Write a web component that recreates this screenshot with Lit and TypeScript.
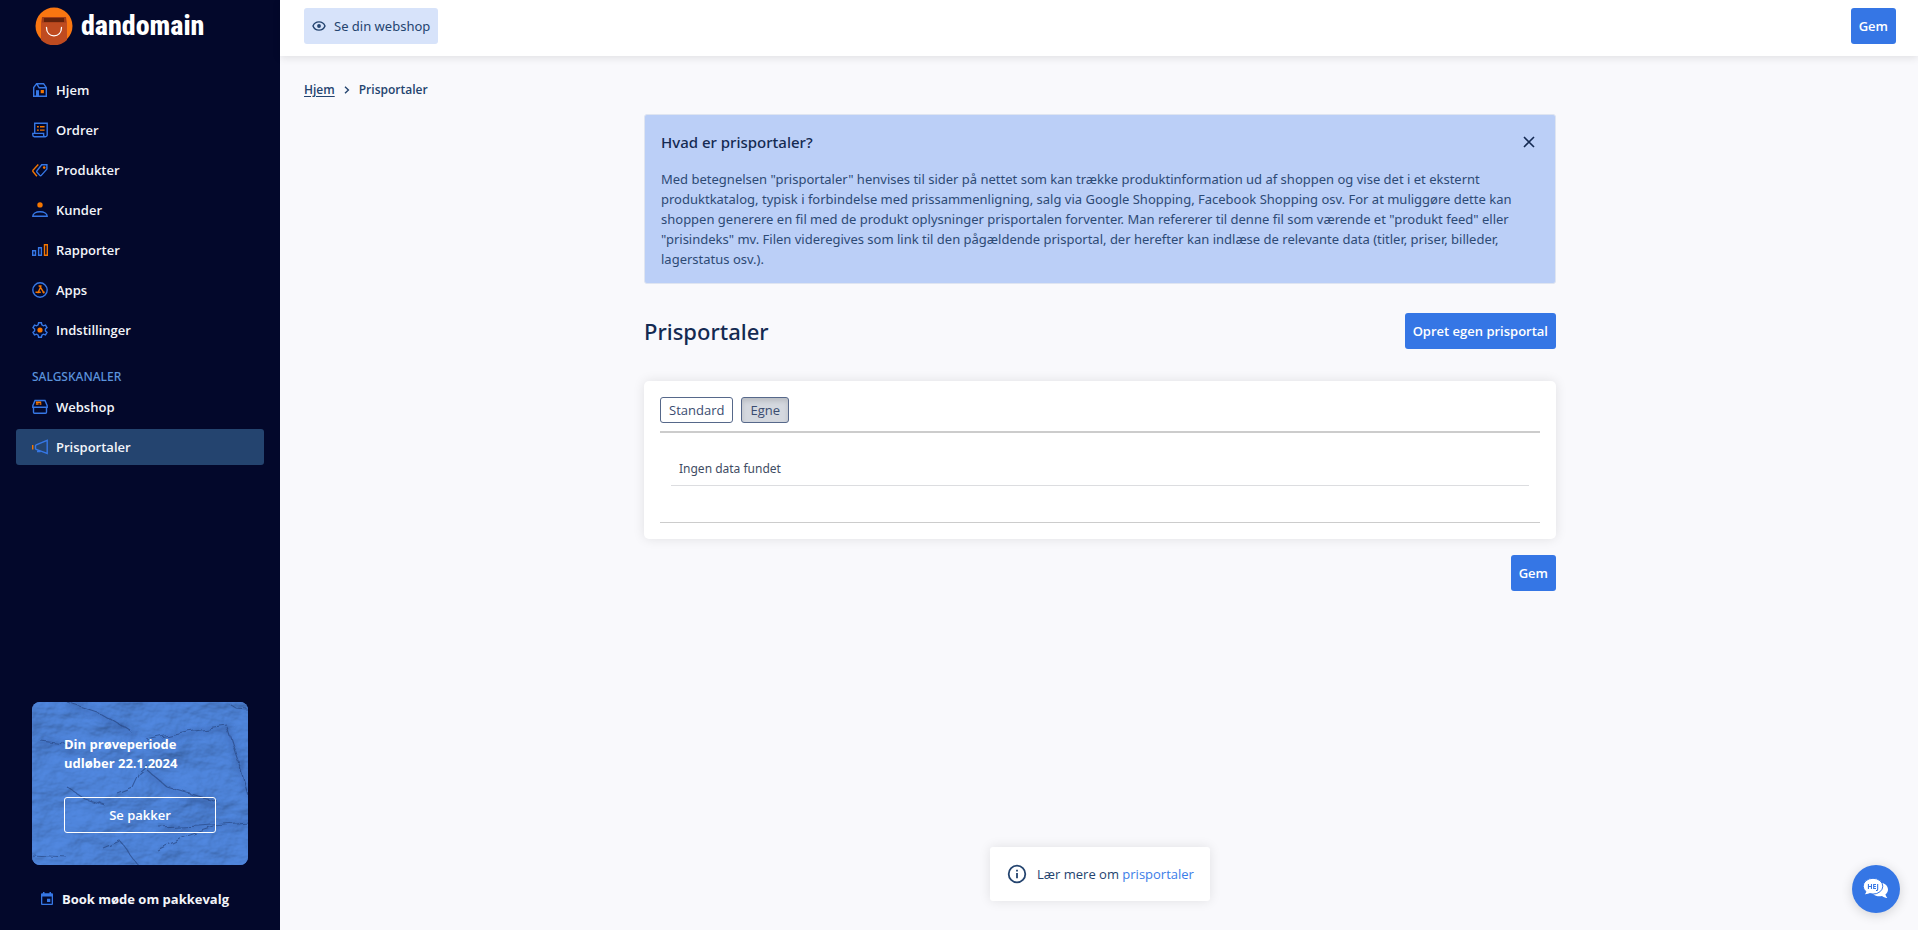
import { LitElement, html, svg, css, TemplateResult } from "lit";
import { customElement, property, state } from "lit/decorators.js";
import { classMap } from "lit/directives/class-map.js";

const icons: Record<string, TemplateResult> = {
  home: svg`<path class="b" d="M1.7 14.3V5.6L4.6 1.7h7l2.7 3.9v8.7zM4.6 1.7l2.6 4.1h7"/><path class="bf" d="M4 8.2h3v6H4z"/><path class="of" d="M8.7 8h3.2v3.2H8.7z"/>`,
  orders: svg`<path class="b" d="M2.7 11.2V1.2h12.5v11.6a1.8 1.8 0 0 1-1.8 1.9H2.4A1.7 1.7 0 0 1 .8 13v-1.6h10.8V13a1.7 1.7 0 0 0 1.8 1.7"/><path class="o" d="M5 4.8h1.8M8 4.8h4.6M5 8.1h1.8M8 8.1h4.6"/>`,
  products: svg`<path class="b" d="M9.7 2.7h5.2v4.4l-5.6 6.3a1 1 0 0 1-1.5 0L5 10.3a1 1 0 0 1 0-1.5z"/><circle class="of" cx="12.2" cy="5.6" r="1.3"/><path class="o" d="M6.3 2.6.9 8.3v1.2l4 4.7"/>`,
  customers: svg`<circle class="of" cx="8" cy="2.9" r="2.7"/><path class="b" d="M.8 14.3c0-2.7 3-4.6 7.2-4.6s7.2 1.9 7.2 4.6z"/>`,
  reports: svg`<path class="b" d="M.7 8.700h2.800v4.600H.7zM6.600 5.700h2.800v7.600H6.600z"/><path class="o" d="M12.500 2.700h2.800v10.600h-2.800z"/>`,
  apps: svg`<circle class="b" cx="8" cy="8" r="7.200"/><path class="o" d="M8.800 4.800 5.700 11.300M7.600 3.800l4.600 7.500M3.500 10.300h5.300M10.500 10.300h2.200M6.600 4h3"/>`,
  settings: svg`<path class="b" d="M6.600.8h2.800l.5 2.100 1.500.9 2.100-.7 1.500 2.500-1.600 1.500v1.800l1.600 1.500-1.500 2.500-2.100-.7-1.500.9-.5 2.100H6.600l-.5-2.100-1.500-.9-2.100.7L1 10.400l1.600-1.500V7.100L1 5.600l1.500-2.500 2.100.7 1.500-.9z"/><circle class="of" cx="8" cy="8" r="2.600"/>`,
  webshop: svg`<path class="b" d="M.8 8.300V6.600L3 1.500h10l2.200 5.100v1.700zM1.500 8.300v4.900a1 1 0 0 0 1 1h11a1 1 0 0 0 1-1V8.300"/><path class="o" d="M3.900 3.300h5.300M3.900 5h2.700M7.600 5h1.800"/>`,
  feed: svg`<path class="b" d="M15.200 1.400v13L11 12.800 4.200 10.400a1 1 0 0 1-.7-.9V6.800a1 1 0 0 1 .7-.9zM5.700 11v1.500h2.800"/><path class="o" d="M.7 6v4.600"/>`,
};

@customElement("nav-icon")
class NavIcon extends LitElement {
  @property() name = "home";
  static styles = css`
    :host { display: block; width: 16px; height: 16px; }
    svg { display: block; }
    .b, .o { fill: none; stroke: #3677e5; stroke-width: 1.4; }
    .o { stroke: #f57600; }
    .bf { fill: #3677e5; }
    .of { fill: #f57600; }
  `;
  render() {
    return html`<svg width="16" height="16" viewBox="0 0 16 16" aria-hidden="true">${icons[this.name]}</svg>`;
  }
}

@customElement("side-bar")
class SideBar extends LitElement {
  static styles = css`
    :host {
      display: flex;
      flex-direction: column;
      box-sizing: border-box;
      background: #03082b;
      color: #f3f5fa;
      padding: 7px 16px 13px;
    }
    a { color: inherit; text-decoration: none; }
    .logo {
      display: flex;
      align-items: center;
      gap: 8px;
      height: 38px;
      padding-left: 19px;
      margin-bottom: 27px;
      color: #fff;
      font: 800 28px/38px "Roboto Condensed", Roboto, sans-serif;
    }
    .nav { display: flex; flex-direction: column; gap: 4px; margin: 0; padding: 0; list-style: none; }
    .item {
      display: flex;
      align-items: center;
      gap: 8px;
      height: 36px;
      padding: 0 16px;
      border-radius: 3px;
      font-weight: 600;
    }
    .active { background: #24446f; }
    .group {
      margin: 19px 16px 2px;
      font-family: "Noto Sans", sans-serif;
      font-size: 12px;
      line-height: 20px;
      font-weight: 500;
      color: #5b93dc;
    }
    .trial {
      display: grid;
      margin: auto 16px 0;
      border-radius: 8px;
      overflow: hidden;
      background: #4e80d9;
    }
    .paper, .content { grid-area: 1 / 1; min-width: 0; }
    .paper { width: 100%; height: 100%; min-height: 0; contain: size; }
    .content { z-index: 1; padding: 33px 32px 32px; font-weight: 700; line-height: 19px; color: #fff; }
    .content p { margin: 0 0 24px; }
    .packages {
      display: block;
      width: 100%;
      height: 36px;
      border: 1px solid #fff;
      border-radius: 3px;
      background: transparent;
      color: #fff;
      font: inherit;
      font-weight: 600;
      cursor: pointer;
    }
    .book {
      display: flex;
      align-items: center;
      gap: 9px;
      height: 36px;
      margin-top: 16px;
      padding-left: 25px;
      font-weight: 700;
    }
    .book svg { margin-bottom: 2px; }
  `;
  private link(icon: string, text: string, active = false) {
    return html`<li><a href="#" class=${classMap({ item: true, active })}><nav-icon .name=${icon}></nav-icon>${text}</a></li>`;
  }
  render() {
    return html`
      <a class="logo" href="#">
        <svg width="38" height="38" viewBox="0 0 38 38" aria-hidden="true">
          <circle cx="19" cy="19" r="18.500" fill="#f97611"/>
          <path d="M7 10h24l1 5v18a18.500 18.500 0 0 1-26 0V15z" fill="#bf4b20"/>
          <path d="M7 10h24v5.500H7z" fill="#a13c17"/>
          <path d="M9 11h20v4H9z" fill="#64220c"/>
          <path d="M11.500 20.500c0 5.300 3.200 8.300 7.500 8.300s7.500-3 7.500-8.300" fill="none" stroke="#fff" stroke-width="1.300" stroke-linecap="round"/>
        </svg>
        <span>dandomain</span>
      </a>
      <nav>
        <ul class="nav">
          ${this.link("home", "Hjem")}${this.link("orders", "Ordrer")}${this.link("products", "Produkter")}
          ${this.link("customers", "Kunder")}${this.link("reports", "Rapporter")}${this.link("apps", "Apps")}
          ${this.link("settings", "Indstillinger")}
        </ul>
        <div class="group">SALGSKANALER</div>
        <ul class="nav">
          ${this.link("webshop", "Webshop")}${this.link("feed", "Prisportaler", true)}
        </ul>
      </nav>
      <section class="trial">
        <svg class="paper" viewBox="0 0 216 163" preserveAspectRatio="none" aria-hidden="true">
          <defs>
            <filter id="grain" x="0" y="0" width="100%" height="100%">
              <feTurbulence type="fractalNoise" baseFrequency="0.018 0.026" numOctaves="5" seed="11" result="n"/>
              <feDiffuseLighting in="n" surfaceScale="6" diffuseConstant="1.050" lighting-color="#5085dc">
                <feDistantLight azimuth="235" elevation="62"/>
              </feDiffuseLighting>
            </filter>
            <filter id="soft" x="-5%" y="-5%" width="110%" height="110%">
              <feTurbulence type="fractalNoise" baseFrequency="0.06" numOctaves="3" seed="4" result="w"/>
              <feDisplacementMap in="SourceGraphic" in2="w" scale="9" result="d"/>
              <feGaussianBlur in="d" stdDeviation="0.600"/>
            </filter>
            <filter id="wide"><feGaussianBlur stdDeviation="3"/></filter>
          </defs>
          <rect width="216" height="163" filter="url(#grain)"/>
          <g fill="none" stroke="#31549b" stroke-width="5" opacity=".4" filter="url(#wide)">
            <path d="M35 2 68 13 85 24 103 34"/><path d="M115 41l40-9 40-7"/><path d="M128 127l40-2 48-4"/><path d="M115 70l20 17 20 9 30 8"/><path d="M8 40l23 3 12 8"/><path d="M195 25l13 40 8 28"/>
          </g>
          <g fill="none" stroke="#243f78" stroke-width="1.100" opacity=".6" filter="url(#soft)">
            <path d="M35 0 68 11 85 21 101 31"/><path d="M115 38l40-9 40-6"/><path d="M8 38l23 3 10 5"/><path d="M85 91l15-6 7-15 8-7"/><path d="M115 68l20 17 20 6 30 8"/><path d="M128 126l40-2 48-4"/><path d="M199 3l6 4 11 1"/><path d="M195 25l13 40 8 28"/><path d="M0 153l35 2"/><path d="M71 146l17-7 17 23"/><path d="M35 85l17 11 20 6"/><path d="M125 148l30-14 27-9"/>
          </g>
        </svg>
        <div class="content">
          <p>Din prøveperiode<br />udløber 22.1.2024</p>
          <button class="packages">Se pakker</button>
        </div>
      </section>
      <a class="book" href="#">
        <svg width="12" height="13" viewBox="0 0 12 13" fill="#3677e5" aria-hidden="true">
          <path d="M2 0h1.500v1.300h5V0H10v1.300h1a1 1 0 0 1 1 1V12a1 1 0 0 1-1 1H1a1 1 0 0 1-1-1V2.300a1 1 0 0 1 1-1h1zM1.300 4.500v7.200h9.400V4.500zM6 6.800h3.300v3.300H6z" fill-rule="evenodd"/>
        </svg>
        Book møde om pakkevalg
      </a>
    `;
  }
}

@customElement("app-root")
class AppRoot extends LitElement {
  @state() private tab = "Egne";
  @state() private showInfo = true;

  static styles = css`
    :host {
      display: grid;
      grid-template-columns: 280px minmax(0, 1fr);
      min-height: 100vh;
      background: #f9f9fc;
      color: #24446f;
      font: 400 13px/20px "Open Sans", "Noto Sans", sans-serif;
    }
    button { font: inherit; cursor: pointer; }
    .main { display: flex; flex-direction: column; min-width: 0; }
    .top {
      display: flex;
      justify-content: space-between;
      align-items: center;
      box-sizing: border-box;
      height: 56px;
      padding: 0 22px 4px 24px;
      background: #fff;
      box-shadow: 0 2px 8px rgba(0, 0, 0, 0.1);
    }
    .view {
      display: flex;
      align-items: center;
      gap: 8px;
      height: 36px;
      padding: 0 8px;
      border-radius: 3px;
      background: #d7e3fa;
      color: #24446f;
      text-decoration: none;
      font-family: "Noto Sans", sans-serif;
    }
    .primary {
      height: 36px;
      padding: 0 8px;
      border: 0;
      border-radius: 3px;
      background: #3576e5;
      color: #fff;
      font-weight: 600;
    }
    .body { flex: 1; display: flex; flex-direction: column; padding: 24px 22px 29px 24px; }
    .crumbs { display: flex; align-items: center; gap: 9px; height: 20px; font-size: 12px; font-weight: 600; }
    .crumbs a { color: inherit; text-underline-offset: 2px; }
    .column { width: 100%; max-width: 912px; margin: 14px auto 0; }
    .info {
      box-sizing: border-box;
      padding: 16px 16px 14px;
      border: 1px solid #dfe5f1;
      border-radius: 3px;
      background: #bbcff7;
      color: #2d4a75;
      font-family: "Noto Sans", sans-serif;
    }
    .info-head { display: flex; justify-content: space-between; align-items: center; height: 22px; }
    .info h2 { margin: 0; font-size: 15px; font-weight: 500; color: #142a52; }
    .close { display: grid; place-items: center; width: 20px; height: 20px; padding: 0; border: 0; background: none; }
    .info p { margin: 16px 0 0; }
    .title { display: flex; justify-content: space-between; align-items: center; margin: 29px 0 32px; }
    h1 { margin: 0; font: 500 22px/32px "Noto Sans", sans-serif; color: #142a52; }
    .card { padding: 16px; border-radius: 5px; background: #fff; box-shadow: 0 0 12px rgba(0, 0, 0, 0.1); }
    .tabs { display: flex; gap: 8px; padding-bottom: 8px; border-bottom: 2px solid #ccc; }
    .tab {
      height: 26px;
      padding: 0 8px;
      border: 1px solid #56688a;
      border-radius: 3px;
      background: #fff;
      color: #3a4c70;
    }
    .selected { background: #d4d8df; box-shadow: inset 0 3px 5px rgba(0, 0, 0, 0.13); }
    .list { padding: 19px 11px 36px; border-bottom: 1px solid #ccc; }
    table { width: 100%; border-collapse: collapse; }
    td { height: 33px; padding: 0 8px; border-bottom: 1px solid #dcdde0; font-family: "Noto Sans", sans-serif; font-size: 12px; color: #3f4c63; }
    .save { display: flex; justify-content: flex-end; margin-top: 16px; }
    .help {
      display: flex;
      align-items: center;
      gap: 10px;
      box-sizing: border-box;
      height: 54px;
      margin: auto auto 0;
      padding: 0 16px 0 17px;
      border-radius: 3px;
      background: #fff;
      box-shadow: 0 0 12px rgba(0, 0, 0, 0.1);
    }
    .help a { color: #3b7de8; text-decoration: none; }
    .chat {
      position: fixed;
      right: 18px;
      bottom: 17px;
      display: grid;
      place-items: center;
      width: 48px;
      height: 48px;
      padding: 0;
      border: 0;
      border-radius: 50%;
      background: #3576e5;
      box-shadow: 0 2px 12px rgba(0, 0, 0, 0.16);
    }
  `;

  render() {
    return html`
      <side-bar></side-bar>
      <div class="main">
        <header class="top">
          <a class="view" href="#">
            <svg width="14" height="12" viewBox="0 0 14 12" fill="none" stroke="#24446f" stroke-width="1.400" aria-hidden="true">
              <path d="M1 6c1-2.600 3.300-4.100 6-4.100S12 3.400 13 6c-1 2.600-3.300 4.100-6 4.100S2 8.600 1 6z"/><circle cx="7" cy="6" r="1.900" fill="#24446f" stroke="none"/>
            </svg>
            Se din webshop
          </a>
          <button class="primary">Gem</button>
        </header>
        <div class="body">
          <nav class="crumbs">
            <a href="#">Hjem</a>
            <svg width="6" height="8" viewBox="0 0 6 8" fill="none" stroke="#24446f" stroke-width="1.400" aria-hidden="true"><path d="M1 .8 4.400 4 1 7.200"/></svg>
            <span>Prisportaler</span>
          </nav>
          <div class="column">
            ${this.showInfo
              ? html`<section class="info">
                  <div class="info-head">
                    <h2>Hvad er prisportaler?</h2>
                    <button class="close" aria-label="Luk" @click=${() => (this.showInfo = false)}>
                      <svg width="12" height="12" viewBox="0 0 12 12" stroke="#142a52" stroke-width="1.600"><path d="M1 1l10 10M11 1 1 11"/></svg>
                    </button>
                  </div>
                  <p>
                    Med betegnelsen "prisportaler" henvises til sider på nettet som kan trække produktinformation ud af shoppen og
                    vise det i et eksternt produktkatalog, typisk i forbindelse med prissammenligning, salg via Google Shopping,
                    Facebook Shopping osv. For at muliggøre dette kan shoppen generere en fil med de produkt oplysninger
                    prisportalen forventer. Man refererer til denne fil som værende et "produkt feed" eller "prisindeks" mv. Filen
                    videregives som link til den pågældende prisportal, der herefter kan indlæse de relevante data (titler,
                    priser, billeder, lagerstatus osv.).
                  </p>
                </section>`
              : ""}
            <div class="title">
              <h1>Prisportaler</h1>
              <button class="primary">Opret egen prisportal</button>
            </div>
            <section class="card">
              <div class="tabs">
                ${["Standard", "Egne"].map(
                  (t) => html`<button
                    class=${classMap({ tab: true, selected: this.tab === t })}
                    aria-pressed=${this.tab === t}
                    @click=${() => (this.tab = t)}
                  >${t}</button>`
                )}
              </div>
              <div class="list">
                <table><tbody><tr><td>Ingen data fundet</td></tr></tbody></table>
              </div>
            </section>
            <div class="save"><button class="primary">Gem</button></div>
          </div>
          <aside class="help">
            <svg width="20" height="20" viewBox="0 0 20 20" aria-hidden="true">
              <circle cx="10" cy="10" r="8.300" fill="none" stroke="#24446f" stroke-width="1.800"/>
              <path d="M9.100 9h1.800v5.200H9.100zM9.100 5.700h1.800v1.800H9.100z" fill="#24446f"/>
            </svg>
            <span>Lær mere om <a href="#">prisportaler</a></span>
          </aside>
        </div>
      </div>
      <button class="chat" aria-label="Chat">
        <svg width="26" height="22" viewBox="0 0 26 22" aria-hidden="true">
          <path d="M17 4.500c4.800.6 8 3.400 8 7 0 2-1 3.800-2.600 5 .3 1.300 1 2.300 1.900 3.400-2 .1-3.900-.6-5.300-1.800-3.600.6-7-.2-9-2.200C15.500 15.500 19.400 10.700 17 4.500z" fill="#fff"/>
          <ellipse cx="10" cy="8.200" rx="9.800" ry="7.900" fill="#fff" stroke="#3576e5" stroke-width="1"/>
          <path d="M3.500 12.500c0 1.500-.7 2.700-1.700 3.800 2.100.1 4-.5 5.400-1.700z" fill="#fff"/>
          <text x="10" y="10.800" text-anchor="middle" font-family="Open Sans, sans-serif" font-size="7" font-weight="700" fill="#3576e5">HEJ</text>
        </svg>
      </button>
    `;
  }
}
